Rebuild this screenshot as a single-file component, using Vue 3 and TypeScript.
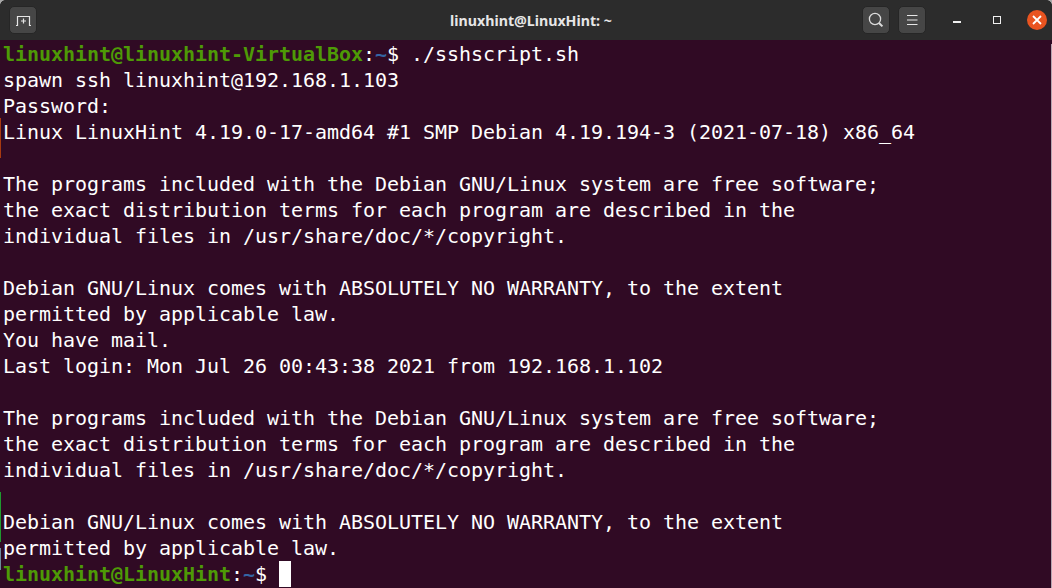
<script setup lang="ts">
interface Seg { t: string; c?: string }
const lines: Seg[][] = [
  [{ t: 'linuxhint@linuxhint-VirtualBox', c: 'g' }, { t: ':' }, { t: '~', c: 'b' }, { t: '$ ./sshscript.sh' }],
  [{ t: 'spawn ssh linuxhint@192.168.1.103' }],
  [{ t: 'Password:' }],
  [{ t: 'Linux LinuxHint 4.19.0-17-amd64 #1 SMP Debian 4.19.194-3 (2021-07-18) x86_64' }],
  [{ t: '' }],
  [{ t: 'The programs included with the Debian GNU/Linux system are free software;' }],
  [{ t: 'the exact distribution terms for each program are described in the' }],
  [{ t: 'individual files in /usr/share/doc/*/copyright.' }],
  [{ t: '' }],
  [{ t: 'Debian GNU/Linux comes with ABSOLUTELY NO WARRANTY, to the extent' }],
  [{ t: 'permitted by applicable law.' }],
  [{ t: 'You have mail.' }],
  [{ t: 'Last login: Mon Jul 26 00:43:38 2021 from 192.168.1.102' }],
  [{ t: '' }],
  [{ t: 'The programs included with the Debian GNU/Linux system are free software;' }],
  [{ t: 'the exact distribution terms for each program are described in the' }],
  [{ t: 'individual files in /usr/share/doc/*/copyright.' }],
  [{ t: '' }],
  [{ t: 'Debian GNU/Linux comes with ABSOLUTELY NO WARRANTY, to the extent' }],
  [{ t: 'permitted by applicable law.' }],
  [{ t: 'linuxhint@LinuxHint', c: 'g' }, { t: ':' }, { t: '~', c: 'b' }, { t: '$ ' }],
]
</script>

<template>
  <div class="window">
    <header class="titlebar">
      <div class="side left">
        <button class="hb">
          <svg width="18" height="12" viewBox="0 0 18 12" fill="none" stroke="#e6e6e6" stroke-width="1.2">
            <path d="M2 11.5h1.5V2.5h12V11.5H17" />
            <path d="M9.5 4.5v5M7 7h5" />
          </svg>
        </button>
      </div>
      <div class="title">linuxhint@LinuxHint: ~</div>
      <div class="side right">
        <button class="hb">
          <svg width="16" height="16" viewBox="0 0 16 16" fill="none" stroke="#dcdcdc" stroke-width="1.3">
            <circle cx="7" cy="7" r="5.6" />
            <path d="M11 11l3.4 3.4" stroke-width="2" />
          </svg>
        </button>
        <button class="hb">
          <svg width="12" height="12" viewBox="0 0 12 12" fill="none" stroke="#e6e6e6" stroke-width="1.2">
            <path d="M1 1.5h10.5M1 6h10.5M1 10.5h10.5" />
          </svg>
        </button>
        <div class="wc min"><span></span></div>
        <div class="wc max"><span></span></div>
        <div class="wc close">
          <svg width="10" height="10" viewBox="0 0 10 10" stroke="#fff" stroke-width="1.8" fill="none">
            <path d="M1 1l8 8M9 1l-8 8" />
          </svg>
        </div>
      </div>
    </header>
    <main class="term">
      <div v-for="(line, i) in lines" :key="i" class="line">
        <span v-for="(s, j) in line" :key="j" :class="s.c">{{ s.t }}</span><span v-if="i === lines.length - 1" class="cursor"></span>
      </div>
    </main>
    <i class="edge orange"></i>
    <i class="edge green"></i>
    <i class="edge steel"></i>
    <i class="edge-right"></i>
  </div>
</template>

<style>
html, body { margin: 0; background: #300a24; overflow: hidden; }
</style>

<style scoped>
.window {
  position: relative;
  width: 1052px;
  height: 588px;
  overflow: hidden;
  background: #300a24;
  display: flex;
  flex-direction: column;
}
.titlebar {
  height: 40px;
  flex: none;
  background: #2c2c2c;
  display: flex;
  align-items: center;
  justify-content: space-between;
  position: relative;
}
.titlebar::before,
.titlebar::after {
  content: "";
  position: absolute;
  top: 0;
  width: 5px;
  height: 5px;
  background: radial-gradient(circle at 100% 100%, transparent 4.5px, #a8a8a8 5px);
}
.titlebar::before { left: 0; }
.titlebar::after { right: 0; transform: scaleX(-1); }
.side { display: flex; align-items: center; }
.left { padding-left: 9px; }
.right { padding-right: 5px; }
.hb {
  width: 28px;
  height: 28px;
  padding: 0;
  box-sizing: border-box;
  background: #464646;
  border: 1px solid #262626;
  border-radius: 5px;
  display: flex;
  align-items: center;
  justify-content: center;
}
.hb + .hb { margin-left: 8px; }
.title {
  position: absolute;
  left: 10px;
  right: 0;
  text-align: center;
  font: 700 14.2px/39px "Noto Sans", sans-serif;
  color: #e6e6e6;
  pointer-events: none;
}
.wc {
  width: 40px;
  height: 28px;
  display: flex;
  align-items: center;
  justify-content: center;
}
.min { margin-left: 11px; }
.min span { width: 8px; height: 2px; background: #f0f0f0; margin-top: 4px; }
.max span { width: 8px; height: 8px; box-sizing: border-box; border: 1px solid #f0f0f0; }
.close {
  width: 20px;
  height: 20px;
  border-radius: 50%;
  background: #e95420;
  margin-left: 10px;
}
.term {
  flex: 1;
  padding: 1px 0 0 3px;
  font-family: "DejaVu Sans Mono", monospace;
  font-size: 20px;
  letter-spacing: -0.04px;
  color: #fff;
}
.line { height: 26px; line-height: 26px; white-space: pre; }
.g { color: #4e9a06; font-weight: 700; }
.b { color: #3465a4; font-weight: 700; }
.cursor {
  display: inline-block;
  width: 12px;
  height: 26px;
  background: #fff;
  vertical-align: top;
}
.edge { position: absolute; left: 0; width: 1px; }
.orange { top: 118px; height: 40px; background: #a83a10; }
.green { top: 492px; height: 50px; background: #1f9a2f; }
.steel { top: 548px; height: 22px; background: #6c8c9c; }
.edge-right { position: absolute; right: 0; top: 44px; bottom: 0; width: 1px; background: #b5a5b0; }
</style>
